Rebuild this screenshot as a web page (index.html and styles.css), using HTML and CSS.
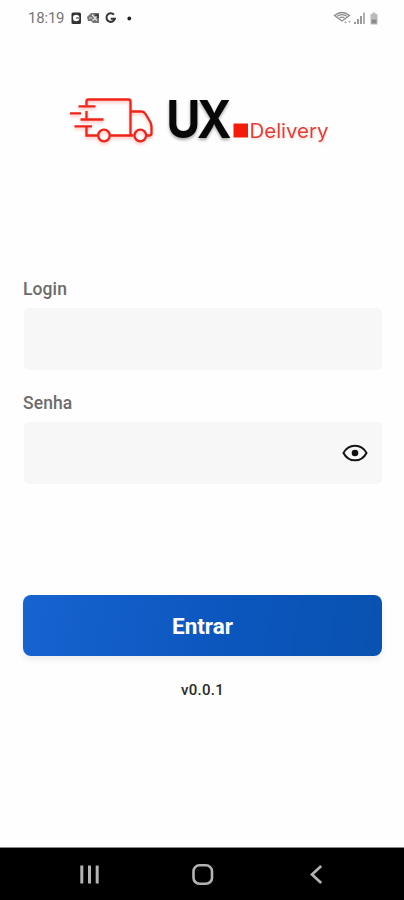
FILE: index.html
```html
<!DOCTYPE html>
<html lang="pt-BR">
<head>
<meta charset="utf-8">
<meta name="viewport" content="width=device-width">
<title>UX Delivery</title>
<link rel="stylesheet" href="styles.css">
</head>
<body>
<header class="status">
  <span class="time">18:19</span>
  <svg class="notices" width="64" height="16" viewBox="70 10 64 16" aria-hidden="true">
    <rect x="71.5" y="12.5" width="9.5" height="11.5" rx="1.5" fill="#333"/>
    <circle cx="76.2" cy="18" r="3.2" fill="#fff"/>
    <path d="M76.2 18h3" stroke="#555" stroke-width="1.3"/>
    <path d="M87 17l4-4h8v10h-6l-2-2h-3z" fill="#777"/>
    <path d="M92 14.5l5 6M92.500 20.500l4-4M89 18h3" stroke="#ddd" stroke-width="1.2"/>
    <path d="M95 15h3v3" stroke="#333" stroke-width="1.5" fill="none"/>
    <path d="M114 14.700a4.300 4.300 0 1 0 .9 4.100h-4.200" fill="none" stroke="#333" stroke-width="2"/>
    <circle cx="129.300" cy="18.500" r="1.900" fill="#222"/>
  </svg>
  <svg class="signals" width="48" height="18" viewBox="333 9 48 18" aria-hidden="true">
    <g fill="none" stroke="#8c8c8c" stroke-width="1.300">
      <path d="M334.500 15.500q7.500-6 15 0l-7.500 5.500z"/>
      <path d="M337 16.300q5-3.500 10 0M339.500 18q2.500-1.700 5 0"/>
    </g>
    <path d="M344 23l1.500-2 1.500 2zM348 21l1.500 2 1.500-2z" fill="#aaa"/>
    <path d="M354 22h2v2h-2zM357 19h2v5h-2zM360 16h2v8h-2z" fill="#999"/>
    <path d="M363 12.500h2V24h-2z" fill="#b0b0b0"/>
    <path d="M372.500 12.500h3V14h2v10.500h-7V14h2z" fill="#bbb"/>
    <path d="M371.500 19.500h5v4h-5z" fill="#8c8c8c"/>
  </svg>
</header>
<main class="screen">
  <svg class="logo" width="270" height="62" viewBox="65 92 270 62" role="img" aria-label="UX Delivery">
    <g class="truck">
      <path d="M86.500 105.500V101.500q0-2 2-2H128.500q2 0 2 2V135.500M86.500 111V118.500M86.500 127V135.500H97.500M110.500 135.500H133.500M130.500 111.500H141.500Q144 111.500 145.500 114L150 121.500Q151.500 124 151.500 127V133.500Q151.500 135.500 149 135.500H147"/>
      <circle cx="104" cy="135.500" r="5.800"/>
      <circle cx="140.300" cy="135.500" r="5.800"/>
      <path d="M78.500 106.300H95.500M70 113.300H81M80.500 119.500H103.500M74.500 126.300H92"/>
    </g>
    <text class="ux" transform="translate(166.300 138) scale(.89 1)">UX</text>
    <rect x="233.500" y="123.500" width="14.500" height="14" fill="#f51b0b"/>
    <text class="delivery" x="249.500" y="137.500" textLength="79" lengthAdjust="spacingAndGlyphs">Delivery</text>
  </svg>
  <form class="form">
    <label class="label" for="login">Login</label>
    <input class="field" id="login" type="text">
    <label class="label" for="senha">Senha</label>
    <div class="password">
      <input class="field" id="senha" type="password">
      <svg class="eye" width="26" height="20" viewBox="0 0 26 20" aria-hidden="true">
        <path d="M1.500 10C6.500.200 19.500.200 24.500 10C19.500 19.800 6.500 19.800 1.500 10z" fill="none" stroke="#151515" stroke-width="2"/>
        <circle cx="13" cy="10" r="3.300" fill="#111"/>
      </svg>
    </div>
    <button class="submit" type="button">Entrar</button>
  </form>
  <p class="version">v0.0.1</p>
</main>
<nav class="navbar">
  <svg width="404" height="52" viewBox="0 848 404 52" fill="none" stroke="#b3b3b3" aria-hidden="true">
    <path d="M81.800 865.500V883.500M89.500 865.500V883.500M97.200 865.500V883.500" stroke-width="3"/>
    <rect x="193.500" y="865.300" width="18.500" height="18.500" rx="6" stroke-width="2.600"/>
    <path d="M321.200 866L312 874.500L321.200 883" stroke-width="2.700"/>
  </svg>
</nav>
</body>
</html>
```
FILE: styles.css
```css
* { box-sizing: border-box; }
body {
  margin: 0;
  height: 900px;
  display: flex;
  flex-direction: column;
  overflow: hidden;
  background: #fefefe;
  font-family: Roboto, "Liberation Sans", sans-serif;
}
.status {
  height: 36px;
  padding: 0 23px 0 28px;
  display: flex;
  align-items: center;
}
.time { width: 42px; font-size: 15px; letter-spacing: -.2px; color: #777; }
.signals { margin-left: auto; }
.screen {
  flex: 1;
  padding: 56px 22px 0 23px;
  display: flex;
  flex-direction: column;
}
.logo { margin-left: 42px; flex: none; overflow: visible; }
.truck {
  fill: none;
  stroke: #ef2318;
  stroke-width: 2.3;
  filter: drop-shadow(0 2px 1.5px rgba(239, 35, 24, .28));
}
.ux {
  font: 700 52.500px Inter, sans-serif;
  letter-spacing: -4px;
  fill: #080808;
  filter: drop-shadow(0 2px 1.5px rgba(0, 0, 0, .35));
}
.delivery {
  font: 400 19.500px Inter, sans-serif;
  fill: #ee3a30;
  filter: drop-shadow(0 2px 1px rgba(239, 35, 24, .15));
}
.form { margin-top: 124px; display: flex; flex-direction: column; }
.label {
  height: 20px;
  margin-bottom: 10px;
  font-size: 17.500px;
  letter-spacing: .1px;
  line-height: 22px;
  font-weight: 500;
  color: #6c6c6c;
}
.field {
  display: block;
  width: 358px;
  height: 62px;
  margin: 0 0 22px 1px;
  padding: 0 16px;
  border: 0;
  border-radius: 5px;
  background: #f7f7f7;
}
.password { position: relative; }
.eye { position: absolute; right: 14px; top: 21px; }
.submit {
  height: 61px;
  margin-top: 89px;
  padding: 1px 0 0;
  border: 0;
  border-radius: 8px;
  background: linear-gradient(100deg, #1763d0, #0b56bd 60%, #0952b0);
  box-shadow: 0 4px 6px rgba(0, 0, 0, .07);
  color: #fff;
  font: 700 22.500px Roboto, sans-serif;
}
.version {
  margin: 24px 0 0;
  text-align: center;
  font-size: 15px;
  letter-spacing: .3px;
  line-height: 20px;
  font-weight: 500;
  color: #2b2b2b;
}
.navbar { height: 53px; background: #000; border-top: 1px solid #888; }
.navbar svg { display: block; }
```
